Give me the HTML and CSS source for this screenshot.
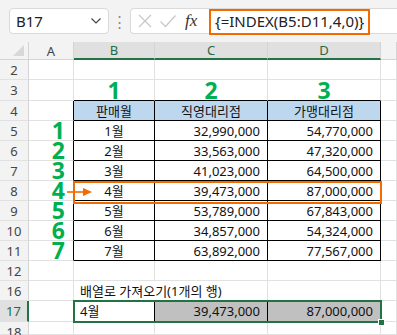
FILE: index.html
```html
<!DOCTYPE html>
<html lang="ko">
<head>
    <meta charset="UTF-8">
    <title>INDEX 배열</title>
    <link rel="stylesheet" href="styles.css">
</head>
<body>
    <div class="topbar">
        <div class="namebox">
            <span>B17</span>
            <svg class="chev" width="12" height="8" viewBox="0 0 12 8"><path d="M1.5 1.5 L6 6 L10.5 1.5" fill="none" stroke="#444" stroke-width="1.2"/></svg>
        </div>
        <div class="dots">⋮</div>
        <div class="fxbox">
            <svg class="ico" width="16" height="16" viewBox="0 0 16 16"><path d="M2 2 L14 14 M14 2 L2 14" stroke="#c8c8c8" stroke-width="1.3"/></svg>
            <svg class="ico" width="18" height="16" viewBox="0 0 18 16"><path d="M1.5 8.5 L6.5 13.5 L16.5 2.5" fill="none" stroke="#c8c8c8" stroke-width="1.3"/></svg>
            <span class="fx">fx</span>
            <div class="formula">{=INDEX(B5:D11,4,0)}</div>
        </div>
    </div>

    <div class="sheet">
        <!-- header row -->
        <div class="corner"><span class="tri"></span></div>
        <div class="ch">A</div>
        <div class="ch sel">B</div>
        <div class="ch sel">C</div>
        <div class="ch sel">D</div>
        <div class="ch"></div>

        <!-- row 2 -->
        <div class="rh">2</div>
        <div class="c"></div><div class="c"></div><div class="c"></div><div class="c"></div><div class="c"></div>

        <!-- row 3 -->
        <div class="rh">3</div>
        <div class="c"></div>
        <div class="c t-top big center">1</div>
        <div class="c t-top big center">2</div>
        <div class="c t-top big center">3</div>
        <div class="c"></div>

        <!-- row 4 -->
        <div class="rh">4</div>
        <div class="c t-left"></div>
        <div class="c t hd center">판매월</div>
        <div class="c t hd center">직영대리점</div>
        <div class="c t hd center">가맹대리점</div>
        <div class="c"></div>

        <div class="rh">5</div>
        <div class="c t-left big num">1</div>
        <div class="c t center">1월</div>
        <div class="c t right">32,990,000</div>
        <div class="c t right">54,770,000</div>
        <div class="c"></div>

        <div class="rh">6</div>
        <div class="c t-left big num">2</div>
        <div class="c t center">2월</div>
        <div class="c t right">33,563,000</div>
        <div class="c t right">47,320,000</div>
        <div class="c"></div>

        <div class="rh">7</div>
        <div class="c t-left big num">3</div>
        <div class="c t center">3월</div>
        <div class="c t right">41,023,000</div>
        <div class="c t right">64,500,000</div>
        <div class="c"></div>

        <div class="rh">8</div>
        <div class="c t-left big num">4</div>
        <div class="c t center">4월</div>
        <div class="c t right">39,473,000</div>
        <div class="c t right">87,000,000</div>
        <div class="c"></div>

        <div class="rh">9</div>
        <div class="c t-left big num">5</div>
        <div class="c t center">5월</div>
        <div class="c t right">53,789,000</div>
        <div class="c t right">67,843,000</div>
        <div class="c"></div>

        <div class="rh">10</div>
        <div class="c t-left big num">6</div>
        <div class="c t center">6월</div>
        <div class="c t right">34,857,000</div>
        <div class="c t right">54,324,000</div>
        <div class="c"></div>

        <div class="rh">11</div>
        <div class="c t-left big num">7</div>
        <div class="c t center">7월</div>
        <div class="c t right">63,892,000</div>
        <div class="c t right">77,567,000</div>
        <div class="c"></div>

        <div class="rh">12</div>
        <div class="c"></div><div class="c"></div><div class="c"></div><div class="c"></div><div class="c"></div>

        <div class="rh">16</div>
        <div class="c"></div>
        <div class="c span2 left">배열로 가져오기(1개의 행)</div>
        <div class="c"></div>
        <div class="c"></div>

        <div class="rh sel">17</div>
        <div class="c"></div>
        <div class="c dark-r left">4월</div>
        <div class="c dark-r gray right">39,473,000</div>
        <div class="c gray right">87,000,000</div>
        <div class="c"></div>

        <div class="rh">18</div>
        <div class="c"></div><div class="c"></div><div class="c"></div><div class="c"></div><div class="c"></div>

        <!-- overlays -->
        <div class="pick"></div>
        <svg class="arrow" width="26" height="10" viewBox="0 0 26 10"><path d="M0 5 H18" stroke="#f26b00" stroke-width="1.6"/><path d="M16 1 L25 5 L16 9 Z" fill="#f26b00"/></svg>
        <div class="selbox"><span class="handle"></span></div>
    </div>
</body>
</html>
```

FILE: styles.css
```css
* {
    box-sizing: border-box;
}
body {
    margin: 0;
    width: 397px;
    height: 335px;
    overflow: hidden;
    background: #fff;
    font-family: "Noto Sans", "Noto Sans CJK KR", sans-serif;
    color: #222;
}
.topbar {
    height: 42px;
    background: #f3f3f3;
    display: flex;
    align-items: flex-start;
    padding: 8px 0 0 9px;
}
.namebox {
    width: 100px;
    height: 26px;
    background: #fff;
    border: 1px solid #dadada;
    border-radius: 4px;
    display: flex;
    align-items: center;
    justify-content: space-between;
    padding: 0 6px 0 6px;
    font-size: 15px;
    color: #222;
}
.dots {
    width: 21px;
    text-align: center;
    color: #8a8a8a;
    font-size: 15px;
    line-height: 26px;
}
.fxbox {
    flex: 1;
    height: 26px;
    background: #fff;
    border: 1px solid #dadada;
    border-right: none;
    border-radius: 4px 0 0 4px;
    display: flex;
    align-items: center;
    padding-left: 6px;
    gap: 6px;
}
.fx {
    font-family: "Liberation Serif", serif;
    font-style: italic;
    font-size: 17px;
    color: #333;
    margin-left: 2px;
    width: 18px;
}
.formula {
    height: 26px;
    width: 161px;
    margin-top: 1px;
    border: 2px solid #f26b00;
    font-size: 15px;
    line-height: 21px;
    padding-left: 4px;
    color: #222;
    white-space: nowrap;
}
.sheet {
    position: relative;
    display: grid;
    grid-template-columns: 29px 45px 81px 113px 113px 16px;
    grid-template-rows: 18px 20px 21px repeat(8, 20px) 20px 20px 21px 13px;
    font-size: 13px;
    line-height: 18px;
}
.corner, .ch, .rh {
    background: #f3f3f3;
    color: #444;
    display: flex;
    align-items: center;
    justify-content: center;
}
.corner {
    border-right: 1px solid #d4d4d4;
    border-bottom: 1px solid #d4d4d4;
    position: relative;
}
.tri {
    position: absolute;
    right: 4px;
    bottom: 3px;
    width: 0;
    height: 0;
    border-left: 11px solid transparent;
    border-bottom: 11px solid #d8d8d8;
}
.ch {
    border-right: 1px solid #d4d4d4;
    border-bottom: 1px solid #d4d4d4;
}
.ch.sel {
    background: #e0e0e0;
    color: #1e6b41;
    border-bottom: 2px solid #217346;
}
.rh {
    border-right: 1px solid #d4d4d4;
    border-bottom: 1px solid #e1e1e1;
    align-items: flex-start;
    padding-top: 1px;
}
.rh.sel {
    background: #e0e0e0;
    color: #1e6b41;
    border-right: 2px solid #217346;
}
.c {
    background: #fff;
    border-right: 1px solid #e1e1e1;
    border-bottom: 1px solid #e1e1e1;
    display: flex;
    align-items: center;
    white-space: nowrap;
    color: #111;
}
.t {
    border-right-color: #000;
    border-bottom-color: #000;
}
.t-top {
    border-bottom-color: #000;
}
.t-left {
    border-right-color: #000;
}
.dark-r {
    border-right-color: #000;
}
.hd {
    background: #bdd7ee;
}
.center {
    justify-content: center;
}
.right {
    justify-content: flex-end;
    padding-right: 7px;
}
.left {
    justify-content: flex-start;
    padding-left: 6px;
}
.num {
    justify-content: flex-end;
    padding-right: 8px;
}
.big {
    color: #00b050;
    font-weight: bold;
    font-size: 23px;
    line-height: 1;
}
.gray {
    background: #c0c0c0;
}
.span2 {
    grid-column: span 2;
}
.pick {
    position: absolute;
    left: 73px;
    top: 139px;
    width: 309px;
    height: 23px;
    border: 2px solid #f26b00;
}
.arrow {
    position: absolute;
    left: 67px;
    top: 145px;
}
.selbox {
    position: absolute;
    left: 73px;
    top: 258px;
    width: 309px;
    height: 23px;
    border: 2px solid #217346;
}
.handle {
    position: absolute;
    right: -5px;
    bottom: -5px;
    width: 7px;
    height: 7px;
    background: #217346;
    border: 1px solid #fff;
}
```
